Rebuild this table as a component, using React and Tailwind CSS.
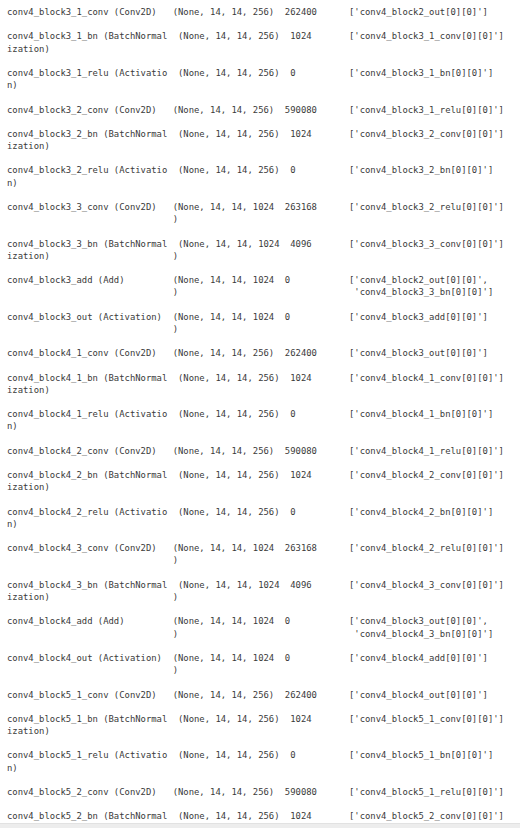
import React from 'react';

// keras model.summary() rows: [name, nameWrap, shape, shapeWrap, params, input, inputWrap]
const rows = [
  ['conv4_block3_1_conv (Conv2D)', null, '(None, 14, 14, 256)', null, '262400', "['conv4_block2_out[0][0]']"],
  ['conv4_block3_1_bn (BatchNormal', 'ization)', '(None, 14, 14, 256)', null, '1024', "['conv4_block3_1_conv[0][0]']"],
  ['conv4_block3_1_relu (Activatio', 'n)', '(None, 14, 14, 256)', null, '0', "['conv4_block3_1_bn[0][0]']"],
  ['conv4_block3_2_conv (Conv2D)', null, '(None, 14, 14, 256)', null, '590080', "['conv4_block3_1_relu[0][0]']"],
  ['conv4_block3_2_bn (BatchNormal', 'ization)', '(None, 14, 14, 256)', null, '1024', "['conv4_block3_2_conv[0][0]']"],
  ['conv4_block3_2_relu (Activatio', 'n)', '(None, 14, 14, 256)', null, '0', "['conv4_block3_2_bn[0][0]']"],
  ['conv4_block3_3_conv (Conv2D)', null, '(None, 14, 14, 1024', ')', '263168', "['conv4_block3_2_relu[0][0]']"],
  ['conv4_block3_3_bn (BatchNormal', 'ization)', '(None, 14, 14, 1024', ')', '4096', "['conv4_block3_3_conv[0][0]']"],
  ['conv4_block3_add (Add)', null, '(None, 14, 14, 1024', ')', '0', "['conv4_block2_out[0][0]',", " 'conv4_block3_3_bn[0][0]']"],
  ['conv4_block3_out (Activation)', null, '(None, 14, 14, 1024', ')', '0', "['conv4_block3_add[0][0]']"],
  ['conv4_block4_1_conv (Conv2D)', null, '(None, 14, 14, 256)', null, '262400', "['conv4_block3_out[0][0]']"],
  ['conv4_block4_1_bn (BatchNormal', 'ization)', '(None, 14, 14, 256)', null, '1024', "['conv4_block4_1_conv[0][0]']"],
  ['conv4_block4_1_relu (Activatio', 'n)', '(None, 14, 14, 256)', null, '0', "['conv4_block4_1_bn[0][0]']"],
  ['conv4_block4_2_conv (Conv2D)', null, '(None, 14, 14, 256)', null, '590080', "['conv4_block4_1_relu[0][0]']"],
  ['conv4_block4_2_bn (BatchNormal', 'ization)', '(None, 14, 14, 256)', null, '1024', "['conv4_block4_2_conv[0][0]']"],
  ['conv4_block4_2_relu (Activatio', 'n)', '(None, 14, 14, 256)', null, '0', "['conv4_block4_2_bn[0][0]']"],
  ['conv4_block4_3_conv (Conv2D)', null, '(None, 14, 14, 1024', ')', '263168', "['conv4_block4_2_relu[0][0]']"],
  ['conv4_block4_3_bn (BatchNormal', 'ization)', '(None, 14, 14, 1024', ')', '4096', "['conv4_block4_3_conv[0][0]']"],
  ['conv4_block4_add (Add)', null, '(None, 14, 14, 1024', ')', '0', "['conv4_block3_out[0][0]',", " 'conv4_block4_3_bn[0][0]']"],
  ['conv4_block4_out (Activation)', null, '(None, 14, 14, 1024', ')', '0', "['conv4_block4_add[0][0]']"],
  ['conv4_block5_1_conv (Conv2D)', null, '(None, 14, 14, 256)', null, '262400', "['conv4_block4_out[0][0]']"],
  ['conv4_block5_1_bn (BatchNormal', 'ization)', '(None, 14, 14, 256)', null, '1024', "['conv4_block5_1_conv[0][0]']"],
  ['conv4_block5_1_relu (Activatio', 'n)', '(None, 14, 14, 256)', null, '0', "['conv4_block5_1_bn[0][0]']"],
  ['conv4_block5_2_conv (Conv2D)', null, '(None, 14, 14, 256)', null, '590080', "['conv4_block5_1_relu[0][0]']"],
  ['conv4_block5_2_bn (BatchNormal', 'ization)', '(None, 14, 14, 256)', null, '1024', "['conv4_block5_2_conv[0][0]']"],
];

function formatRow([name, nameWrap, shape, shapeWrap, params, input, inputWrap]) {
  // wrapped names push shape/params one column right
  const off = nameWrap ? 1 : 0;
  const first = name.padEnd(31 + off) + shape;
  const line1 = (first.padEnd(52 + off) + params).padEnd(64) + input;
  const lines = [line1];
  if (nameWrap || shapeWrap || inputWrap) {
    let l2 = (nameWrap || '').padEnd(31) + (shapeWrap || '');
    if (inputWrap) l2 = l2.padEnd(64) + inputWrap;
    lines.push(l2.trimEnd());
  }
  return lines.join('\n');
}

const text = rows.map(formatRow).join('\n\n');

export default function App() {
  return (
    <div className="w-[520px] h-[828px] bg-white flex flex-col overflow-hidden">
      <div className="flex-1 overflow-hidden">
        <pre className="pl-[7px] pt-[6px] m-0 text-[8.9px] leading-[12.18px] text-[#3a3a3a] font-['DejaVu_Sans_Mono',monospace] whitespace-pre">
          {text}
        </pre>
      </div>
      {/* horizontal scrollbar track */}
      <div className="h-[5px] bg-[#ededed] border-t border-[#e2e2e2]" />
    </div>
  );
}
